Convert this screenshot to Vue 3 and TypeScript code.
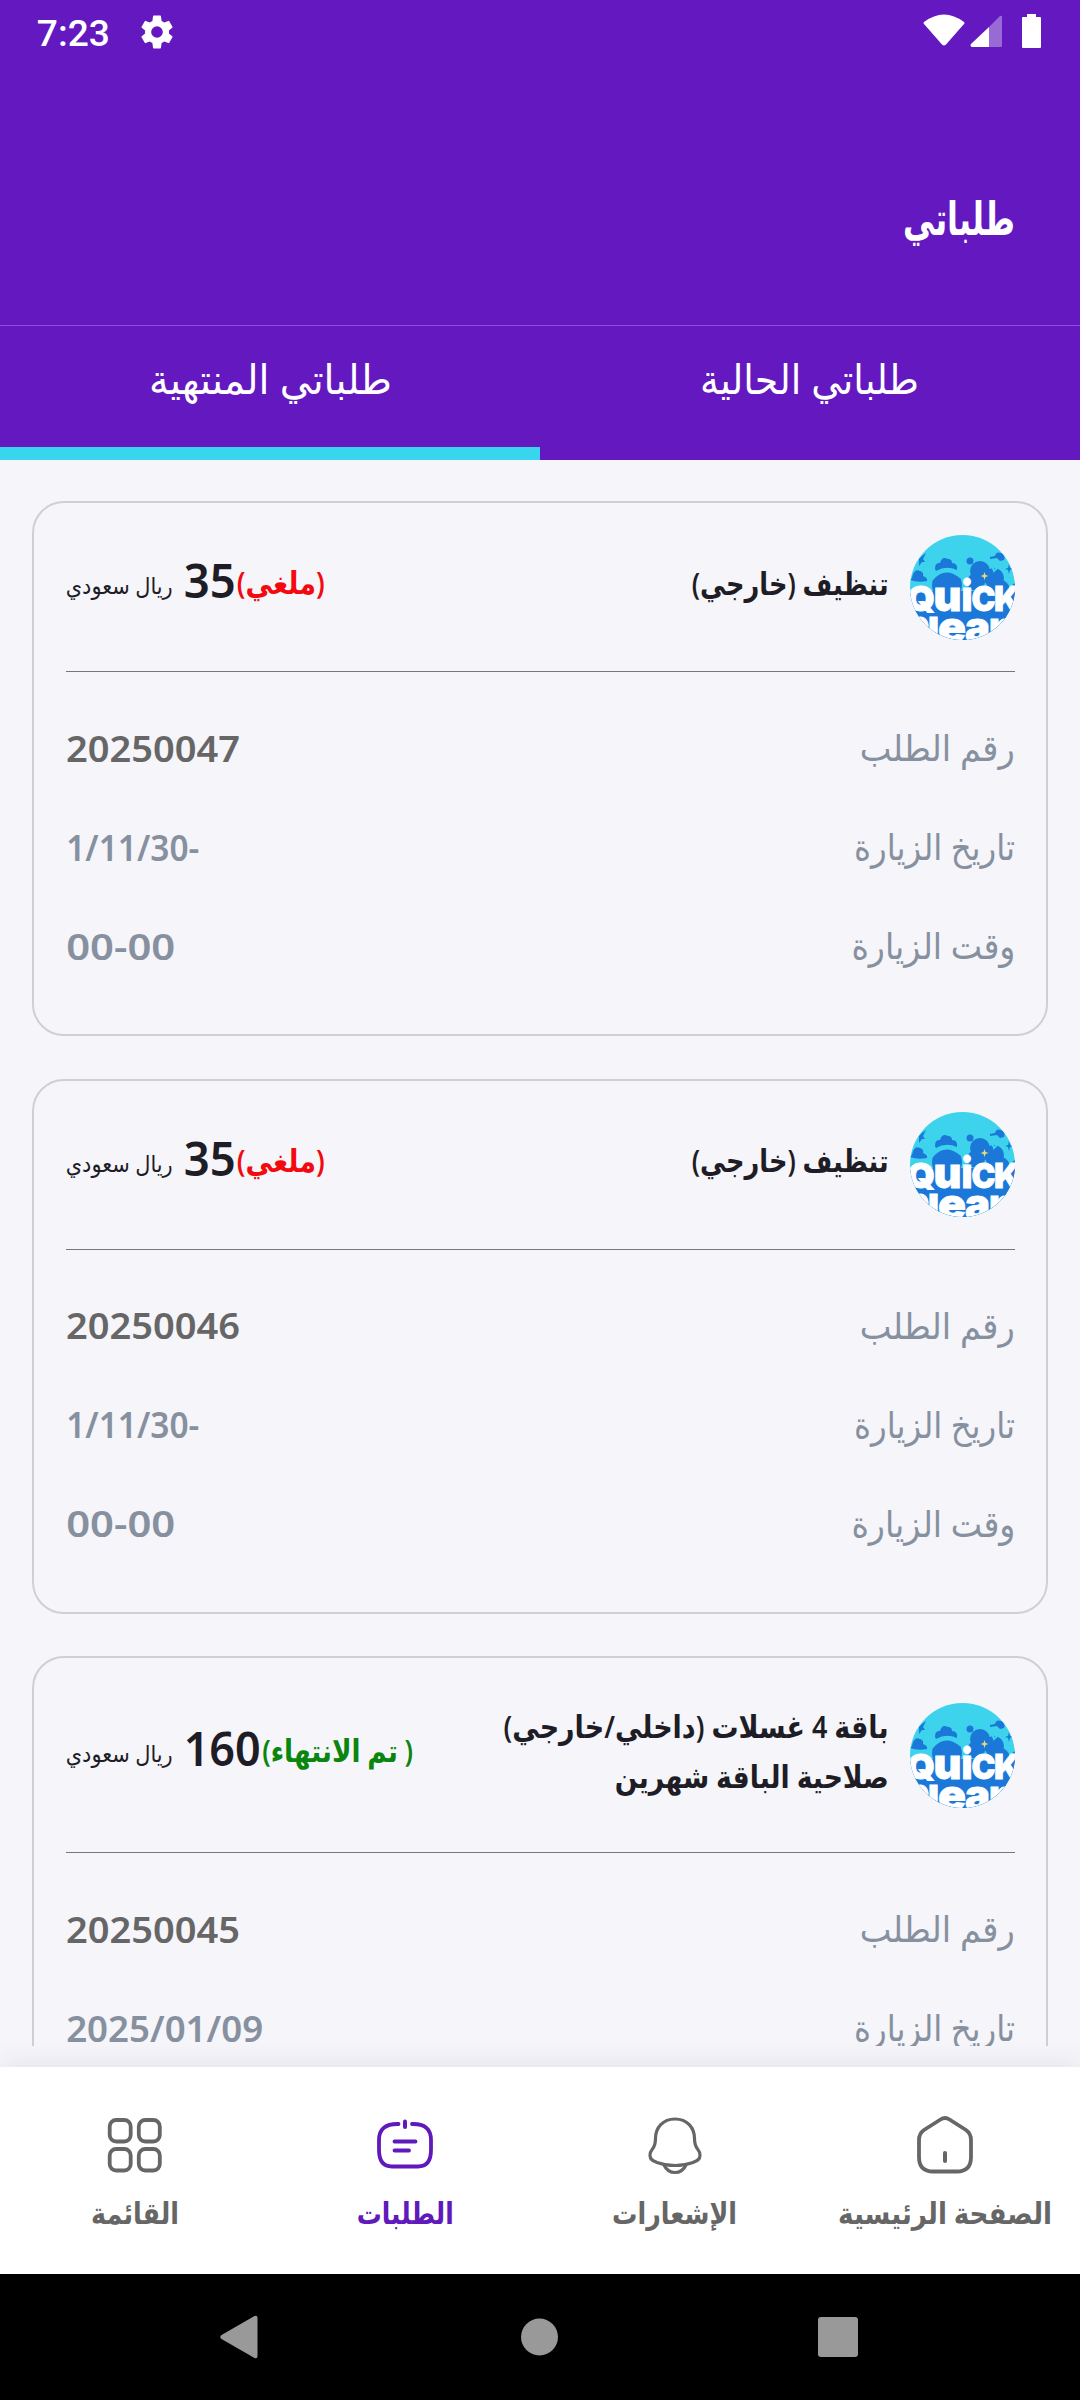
<template>
  <div class="screen" dir="rtl">
    <header class="top">
      <div class="status-bar" dir="ltr">
        <span v-fit="73" class="clock">7:23</span>
        <svg class="gear" viewBox="0 0 24 24">
          <path
            fill="#fff"
            fill-rule="evenodd"
            d="M19.14 12.94c.04-.3.06-.61.06-.94s-.02-.64-.07-.94l2.03-1.58a.49.49 0 0 0 .12-.61l-1.92-3.32a.49.49 0 0 0-.59-.22l-2.39.96a7 7 0 0 0-1.62-.94L14.4 2.5a.5.5 0 0 0-.48-.41h-3.84a.5.5 0 0 0-.47.41l-.36 2.85c-.59.24-1.13.57-1.62.94l-2.39-.96a.48.48 0 0 0-.59.22L2.74 8.87a.48.48 0 0 0 .12.61l2.03 1.58a6 6 0 0 0-.02 1.88l-2.03 1.58a.49.49 0 0 0-.12.61l1.92 3.32c.12.22.37.29.59.22l2.39-.96c.5.38 1.03.7 1.62.94l.36 2.85c.05.24.24.41.48.41h3.84c.24 0 .44-.17.47-.41l.36-2.85c.59-.24 1.13-.56 1.62-.94l2.39.96c.22.08.47 0 .59-.22l1.92-3.32a.48.48 0 0 0-.12-.61zM12 15.5a3.5 3.5 0 1 1 0-7 3.5 3.5 0 0 1 0 7z"
          />
        </svg>
        <svg class="signals" viewBox="0 0 120 36">
          <path d="M1 9Q21-6 41 9Q42 10 41 11L23 31.500Q21 33.500 19 31.500L1 11Q0 10 1 9Z" fill="#fff" />
          <path d="M66 14V34H49Q46.500 33 48 31Z" fill="#fff" />
          <path d="M66 14L77 3Q79 2 79 4V33Q79 34 78 34H66Z" fill="#fff" opacity=".35" />
          <path d="M104 1h9v3h4q1 0 1 1v29q0 1-1 1h-17q-1 0-1-1V5q0-1 1-1h4z" fill="#fff" />
        </svg>
      </div>
      <h1 class="title"><span v-fit="112">طلباتي</span></h1>
    </header>

    <nav class="tabs">
      <button
        v-for="tab in tabs"
        :key="tab.id"
        class="tab"
        :class="{ active: tab.id === activeTab }"
        @click="activeTab = tab.id"
      >
        <span v-fit="tab.width">{{ tab.label }}</span>
      </button>
    </nav>

    <main class="list">
      <article v-for="order in orders" :key="order.number" class="card">
        <div class="card-head" :class="{ tall: order.title.length > 1 }">
          <svg class="avatar" viewBox="0 0 105 105">
            <defs>
              <clipPath :id="'round-' + order.number"><circle cx="52.500" cy="52.500" r="52.500" /></clipPath>
            </defs>
            <g :clip-path="`url(#round-${order.number})`">
              <rect width="105" height="105" fill="#3dd3ec" />
              <g fill="#1b78d8">
                <path d="M0 58Q8 49 25 57V105H105V48Q98 52 97 60Q80 45 53 65L20 63L0 60Z" />
                <path d="M0 56H105V105H0Z" />
                <circle cx="37" cy="50" r="15" />
                <circle cx="70" cy="36" r="10" />
                <circle cx="84" cy="43" r="10" />
                <circle cx="66" cy="47" r="9" />
                <circle cx="88" cy="56" r="12" />
                <circle cx="60" cy="26" r="3.500" />
                <path d="M25 34Q25 27 30 28Q32 21 38 24Q42 24 42 28Q48 28 47 35Q36 30 26 36Z" />
                <path d="M2 43Q4 33 10 36Q14 37 13 41Q18 43 17 46Q8 48 0 45Z" />
                <path d="M80 22L85 21Q86 16 91 18Q96 20 94 25L90 26L87 23L80 24Z" />
                <path d="M9 24L12 21L16 18L13 24L15 27L12 27L9 31Z" />
                <path d="M99 29l1 4 3 1-3 1-1 4-1-4-3-1 3-1z" />
              </g>
              <path d="M22 44Q35 29 51 42" fill="none" stroke="#3dd3ec" stroke-width="3" />
              <path d="M81 28L84 36L89 31" fill="none" stroke="#3dd3ec" stroke-width="2" />
              <path d="M74.500 37l1 3 3 1-3 1-1 3-1-3-3-1 3-1z" fill="#f0dc72" />
              <text v-for="word in brand" :key="word.y" class="brand" :y="word.y"><tspan
                v-for="glyph in word.glyphs"
                :key="glyph.char"
                :x="glyph.x"
                :class="{ small: glyph.char === glyph.char.toLowerCase() && glyph.char !== 'l' }"
                :textLength="glyph.width"
                lengthAdjust="spacingAndGlyphs"
              >{{ glyph.char }}</tspan></text>
            </g>
          </svg>
          <div class="service">
            <div v-for="line in order.title" :key="line.text">
              <span v-fit="line.width">{{ line.text }}</span>
            </div>
          </div>
          <div class="price">
            <span v-fit="order.status.width" class="state" :class="order.status.kind">{{ order.status.text }}</span>
            <span v-fit="order.priceWidth" class="amount">{{ order.price }}</span>
            <span v-fit="107" class="currency">ريال سعودي</span>
          </div>
        </div>
        <div class="row">
          <span v-fit="155" class="label">رقم الطلب</span>
          <span v-fit="174" class="value number">{{ order.number }}</span>
        </div>
        <div class="row">
          <span v-fit="161" class="label">تاريخ الزيارة</span>
          <span v-fit="order.dateWidth" class="value">{{ order.date }}</span>
        </div>
        <div class="row">
          <span v-fit="164" class="label">وقت الزيارة</span>
          <span v-fit="109" class="value">{{ order.time }}</span>
        </div>
      </article>
    </main>

    <footer class="bottom-nav">
      <a class="nav-item">
        <svg viewBox="0 0 60 60">
          <path
            d="M25.500 4.500Q30 1.500 34.500 4.500L51 15Q56 18.500 56 25V42Q56 56.500 42 56.500H18Q4 56.500 4 42V25Q4 18.500 9 15Z"
          />
          <path d="M30 38V46" stroke-width="4" />
        </svg>
        <span v-fit="214">الصفحة الرئيسية</span>
      </a>
      <a class="nav-item">
        <svg viewBox="0 0 60 60" class="thin">
          <path
            d="M30 4C18 4 10.500 12.500 10.500 23.500C10.500 36 5 32.500 5 40.500C5 45 8.500 46 12 47.500C23 51.500 37 51.500 48 47.500C51.500 46 55 45 55 40.500C55 32.500 49.500 36 49.500 23.500C49.500 12.500 42 4 30 4Z"
          />
          <path d="M19 50Q22.500 57.500 30 57.500Q37.500 57.500 41 50" />
        </svg>
        <span v-fit="125">الإشعارات</span>
      </a>
      <a class="nav-item current">
        <svg viewBox="0 0 60 60">
          <path d="M23.500 9Q4 8.500 4 25V35Q4 51.500 17 51.500H43Q56 51.500 56 35V25Q56 8.500 37 9" />
          <path d="M30 6.500V12" stroke-width="4" />
          <path d="M19.500 26.500H40.500M19.500 35.500H34" />
        </svg>
        <span v-fit="97">الطلبات</span>
      </a>
      <a class="nav-item">
        <svg viewBox="0 0 60 60">
          <rect v-for="c in cells" :key="c.x + '-' + c.y" :x="c.x" :y="c.y" width="21" height="21.500" rx="6.500" />
        </svg>
        <span v-fit="88">القائمة</span>
      </a>
    </footer>

    <div class="system-nav" dir="ltr">
      <svg viewBox="0 0 44 44"><path d="M35.500 1Q38.500 0 38.500 3V41Q38.500 44 35.500 43L2.500 24Q0 22 2.500 20Z" /></svg>
      <svg viewBox="0 0 44 44"><circle cx="21.500" cy="22" r="18.500" /></svg>
      <svg viewBox="0 0 44 44"><rect x="1" y="2" width="40" height="40" rx="3" /></svg>
    </div>
  </div>
</template>

<script setup lang="ts">
import { ref } from 'vue'
import type { Directive } from 'vue'

interface Line {
  text: string
  width: number
}

interface Order {
  number: string
  title: Line[]
  status: Line & { kind: 'cancelled' | 'done' }
  price: number
  priceWidth: number
  date: string
  dateWidth: number
  time: string
}

// Condenses or widens a label so it takes exactly the given width
const vFit: Directive<HTMLElement, number> = {
  mounted(el, binding) {
    const natural = el.getBoundingClientRect().width
    el.style.marginLeft = `${binding.value - natural}px`
    el.style.transform = `scaleX(${binding.value / natural})`
  },
}

const activeTab = ref('finished')

const tabs = [
  { id: 'current', label: 'طلباتي الحالية', width: 219 },
  { id: 'finished', label: 'طلباتي المنتهية', width: 243 },
]

const orders: Order[] = [
  {
    number: '20250047',
    title: [{ text: 'تنظيف (خارجي)', width: 197 }],
    status: { text: '(ملغي)', width: 88, kind: 'cancelled' },
    price: 35,
    priceWidth: 52,
    date: '-1/11/30',
    dateWidth: 133,
    time: '00-00',
  },
  {
    number: '20250046',
    title: [{ text: 'تنظيف (خارجي)', width: 197 }],
    status: { text: '(ملغي)', width: 88, kind: 'cancelled' },
    price: 35,
    priceWidth: 52,
    date: '-1/11/30',
    dateWidth: 133,
    time: '00-00',
  },
  {
    number: '20250045',
    title: [
      { text: 'باقة 4 غسلات (داخلي/خارجي)', width: 385 },
      { text: 'صلاحية الباقة شهرين', width: 274 },
    ],
    status: { text: '( تم الانتهاء)', width: 151, kind: 'done' },
    price: 160,
    priceWidth: 77,
    date: '2025/01/09',
    dateWidth: 197,
    time: '00-00',
  },
]

const brand = [
  {
    y: 75.5,
    glyphs: [
      { char: 'Q', x: -3, width: 28 },
      { char: 'u', x: 23.5, width: 28 },
      { char: 'i', x: 51.5, width: 11 },
      { char: 'C', x: 61.5, width: 24 },
      { char: 'K', x: 84, width: 26 },
    ],
  },
  {
    y: 107,
    glyphs: [
      { char: 'C', x: 1, width: 18 },
      { char: 'l', x: 18, width: 11 },
      { char: 'e', x: 28, width: 28 },
      { char: 'a', x: 55, width: 25 },
      { char: 'n', x: 79, width: 25 },
    ],
  },
]

const cells = [
  { x: 4.7, y: 5 },
  { x: 33.8, y: 5 },
  { x: 4.7, y: 34 },
  { x: 33.8, y: 34 },
]
</script>

<style>
body {
  margin: 0;
  background: #f5f5fa;
}
</style>

<style scoped>
.screen {
  display: flex;
  flex-direction: column;
  width: 1080px;
  height: 2400px;
  overflow: hidden;
  background: #f5f5fa;
  color: #1e1d26;
  font-family: 'Noto Sans', 'DejaVu Sans', sans-serif;
}
span {
  display: inline-block;
  flex: none;
  white-space: nowrap;
  transform-origin: right center;
}
svg {
  display: block;
  flex: none;
}
.top {
  height: 325px;
  background: #6319bf;
  color: #fff;
  flex: none;
}
.status-bar {
  display: flex;
  align-items: flex-start;
  height: 64px;
  padding: 12px 37px 0;
  box-sizing: border-box;
}
.clock {
  font: 500 37px/44px Roboto, sans-serif;
}
.gear {
  width: 40px;
  height: 40px;
  margin-left: 27px;
}
.signals {
  width: 120px;
  height: 36px;
  margin: 1px 0 0 auto;
}
.title {
  margin: 0;
  padding: 118px 65px 0;
  font-size: 46px;
  line-height: 70px;
  font-weight: 700;
}
.tabs {
  display: flex;
  flex: none;
  height: 135px;
  box-sizing: border-box;
  border-top: 1px solid #8d4fd6;
  background: #6319bf;
}
.tab {
  flex: 1;
  padding: 0 0 18px;
  border: 0;
  border-bottom: 13px solid transparent;
  background: none;
  color: #fff;
  font: 400 41px/60px 'Noto Sans', 'DejaVu Sans', sans-serif;
}
.tab.active {
  border-bottom-color: #39d5ef;
}
.list {
  display: flex;
  flex-direction: column;
  gap: 42.5px;
  height: 1586px;
  flex: none;
  padding: 41px 32px 0;
  box-sizing: border-box;
  overflow: hidden;
}
.card {
  flex: none;
  padding: 0 31px 39px 32px;
  border: 2px solid #cfcfd5;
  border-radius: 32px;
}
.card-head {
  display: flex;
  align-items: center;
  height: 169px;
  margin-bottom: 26px;
  box-sizing: border-box;
  border-bottom: 1px solid #77777c;
}
.card-head.tall {
  height: 195px;
}
.avatar {
  width: 105px;
  height: 105px;
}
.brand {
  direction: ltr;
  fill: #fff;
  stroke: #fff;
  stroke-width: 0.8;
  font: 900 34px Inter, sans-serif;
}
.brand .small {
  font-size: 42px;
}
.service {
  flex: 1;
  padding: 0 21px 9px 0;
  font-size: 31px;
  line-height: 50px;
  font-weight: 600;
}
.price {
  display: flex;
  align-items: baseline;
  padding-bottom: 14px;
}
.state {
  font-size: 31px;
  font-weight: 600;
  line-height: 40px;
}
.cancelled {
  color: #f20a0f;
}
.done {
  color: #0a850e;
}
.amount {
  font-size: 47px;
  font-weight: 600;
  margin-right: 1px;
}
.currency {
  margin-right: 11px;
  font-size: 23px;
}
/* The small texts stand slightly above the baseline of the amount */
.state,
.currency {
  position: relative;
  top: -4px;
}
.row {
  display: flex;
  justify-content: space-between;
  align-items: center;
  height: 99px;
}
.label {
  color: #86909f;
  font-size: 36px;
  font-weight: 400;
}
.value {
  color: #86909f;
  font-size: 36.5px;
  font-weight: 600;
}
.number {
  color: #666;
}
.bottom-nav {
  display: flex;
  flex: none;
  height: 207px;
  margin-top: 21px;
  background: #fff;
  box-shadow: 0 -4px 24px rgba(60, 50, 80, 0.09);
}
.nav-item {
  flex: 1 1 0;
  min-width: 0;
  display: flex;
  flex-direction: column;
  align-items: center;
  padding-top: 48px;
  color: #666;
  font-size: 30px;
  line-height: 46px;
  font-weight: 600;
}
.nav-item svg {
  width: 60px;
  height: 60px;
  margin-bottom: 15px;
  fill: none;
  stroke: currentColor;
  stroke-width: 3.8;
  stroke-linecap: round;
  stroke-linejoin: round;
}
.nav-item svg.thin {
  stroke-width: 3.2;
}
.nav-item.current {
  color: #6019bb;
}
.system-nav {
  display: flex;
  justify-content: center;
  align-items: center;
  gap: 255px;
  height: 126px;
  flex: none;
  background: #000;
}
.system-nav svg {
  width: 44px;
  height: 44px;
  fill: #999;
}
</style>
